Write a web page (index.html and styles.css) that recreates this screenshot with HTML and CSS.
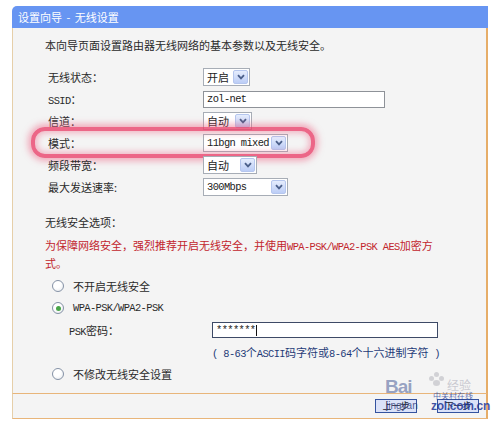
FILE: index.html
```html
<!DOCTYPE html>
<html lang="zh-CN">
<head>
<meta charset="utf-8">
<title>设置向导 - 无线设置</title>
<link rel="stylesheet" href="styles.css">
</head>
<body>
<div class="panel">
  <div class="hd">设置向导 - 无线设置</div>
  <div class="bd">
    <p class="intro">本向导页面设置路由器无线网络的基本参数以及无线安全。</p>
    <div class="form">
      <div class="row"><span class="lbl">无线状态：</span><div class="sel w47"><span class="val">开启</span><span class="arr"><svg width="8" height="6" viewBox="0 0 8 6"><path d="M1 1.2 4 4.4 7 1.2" fill="none" stroke="#4b5f8a" stroke-width="1.8"/></svg></span></div></div>
      <div class="row"><span class="lbl"><span class="m">SSID</span>：</span><div class="inp w182"><span class="m">zol-net</span></div></div>
      <div class="row"><span class="lbl">信道：</span><div class="sel w49"><span class="val">自动</span><span class="arr"><svg width="8" height="6" viewBox="0 0 8 6"><path d="M1 1.2 4 4.4 7 1.2" fill="none" stroke="#4b5f8a" stroke-width="1.8"/></svg></span></div></div>
      <div class="row hl"><span class="glow"></span><span class="lbl">模式：</span><div class="sel w85"><span class="val m">11bgn mixed</span><span class="arr"><svg width="8" height="6" viewBox="0 0 8 6"><path d="M1 1.2 4 4.4 7 1.2" fill="none" stroke="#4b5f8a" stroke-width="1.8"/></svg></span></div></div>
      <div class="row"><span class="lbl">频段带宽：</span><div class="sel w54"><span class="val">自动</span><span class="arr"><svg width="8" height="6" viewBox="0 0 8 6"><path d="M1 1.2 4 4.4 7 1.2" fill="none" stroke="#4b5f8a" stroke-width="1.8"/></svg></span></div></div>
      <div class="row"><span class="lbl">最大发送速率:</span><div class="sel w85"><span class="val m">300Mbps</span><span class="arr"><svg width="8" height="6" viewBox="0 0 8 6"><path d="M1 1.2 4 4.4 7 1.2" fill="none" stroke="#4b5f8a" stroke-width="1.8"/></svg></span></div></div>
    </div>
    <p class="sec">无线安全选项：</p>
    <p class="warn">为保障网络安全，强烈推荐开启无线安全，并使用<span class="m">WPA-PSK/WPA2-PSK AES</span>加密方式。</p>
    <div class="radio"><span class="rb"></span><span>不开启无线安全</span></div>
    <div class="radio"><span class="rb on"></span><span class="m">WPA-PSK/WPA2-PSK</span></div>
    <div class="psk"><span class="lbl"><span class="m">PSK</span>密码：</span><div class="inp pw"><span class="m">*******</span><i class="caret"></i></div></div>
    <div class="hint"><span class="m">( 8-63</span>个<span class="m">ASCII</span>码字符或<span class="m">8-64</span>个十六进制字符<span class="m"> )</span></div>
    <div class="radio"><span class="rb"></span><span>不修改无线安全设置</span></div>
  </div>
  <div class="ft">
    <span class="btn">上一步</span>
    <span class="btn">下一步</span>
    <div class="wm">
      <span class="paw"><i></i><i></i><i></i><i></i></span>
      <span class="bai">Bai</span><span class="jy">经验</span>
      <span class="jyurl">jingyan</span>
      <span class="zcn">中关村在线</span>
      <span class="zol">zol.com.cn</span>
    </div>
  </div>
</div>
</body>
</html>
```

FILE: styles.css
```css
* { box-sizing: border-box; }
html, body { margin: 0; padding: 0; background: #fff; }
body {
  padding: 6px 0 0 12px;
  font-family: "Noto Sans CJK SC", "Liberation Sans", sans-serif;
  font-size: 11px;
  color: #2a2a2a;
}
p { margin: 0; }
.m {
  font-family: "Liberation Mono", "DejaVu Sans Mono", monospace;
  font-size: 10.4px;
  letter-spacing: -0.6px;
  line-height: 1;
}

.panel { width: 476px; }
.hd {
  height: 22px;
  line-height: 22px;
  background: #6795f2;
  color: #fff;
  padding-left: 6px;
  border-radius: 5px 0 0 0;
  font-size: 11px;
  word-spacing: 2px;
}
.bd {
  background: #f4f4f4;
  border-left: 1px solid #e6cfa9;
  border-right: 2px solid #e6ad68;
  padding: 9px 0 8px 32px;
}
.intro { line-height: 16px; }

.form { margin-top: 13px; }
.row {
  display: grid;
  grid-template-columns: 155px auto;
  align-items: center;
  height: 22px;
  padding-left: 3px;
  position: relative;
}
.row > .sel, .row > .inp { justify-self: start; }

.sel {
  display: flex;
  align-items: center;
  justify-content: space-between;
  height: 18px;
  border: 1px solid #a7adb6;
  background: #fff;
  padding: 1px 1px 1px 3px;
}
.val { color: #222; line-height: 14px; }
.arr {
  width: 15px;
  height: 14px;
  display: flex;
  align-items: center;
  justify-content: center;
  border: 1px solid #b5c6ee;
  border-radius: 2px;
  background: linear-gradient(#e6edfd, #bccdf6);
}
.w47 { width: 47px; }
.w49 { width: 49px; }
.w54 { width: 54px; }
.w85 { width: 85px; }

.inp {
  height: 17px;
  border: 1px solid #8e9298;
  background: #fff;
  display: flex;
  align-items: center;
  padding-left: 3px;
  color: #222;
}
.w182 { width: 182px; }

.glow {
  position: absolute;
  left: -14px;
  top: -5px;
  width: 284px;
  height: 31px;
  border: 4px solid rgba(234, 66, 108, 0.8);
  border-radius: 14px;
  box-shadow: 0 0 6px 3px rgba(238, 96, 130, 0.5), inset 0 0 6px 2px rgba(238, 96, 130, 0.45);
  pointer-events: none;
}

.sec { margin-top: 16px; line-height: 16px; }
.warn {
  margin-top: 6px;
  width: 394px;
  line-height: 18px;
  color: #c2252c;
}

.radio {
  display: flex;
  align-items: center;
  height: 22px;
  padding-left: 7px;
  gap: 9px;
}
.warn + .radio { margin-top: 3px; }
.rb {
  width: 12px;
  height: 12px;
  border-radius: 50%;
  border: 1px solid #8592a6;
  background: radial-gradient(circle at 40% 35%, #ffffff 40%, #e3e6ea);
  display: flex;
  align-items: center;
  justify-content: center;
}
.rb.on::after {
  content: "";
  width: 5px;
  height: 5px;
  border-radius: 50%;
  background: #48a548;
}

.psk {
  display: grid;
  grid-template-columns: 143px auto;
  align-items: center;
  height: 22px;
  padding-left: 24px;
}
.pw {
  width: 226px;
  height: 16px;
  border-color: #3d4a66;
}
.caret { display: inline-block; width: 1px; height: 11px; background: #111; margin-left: 1px; }

.hint {
  height: 22px;
  line-height: 22px;
  padding-left: 167px;
  color: #1f3b78;
}

.ft {
  position: relative;
  height: 26px;
  background: #f4f4f4;
  border-top: 1px solid #e8b57a;
  border-bottom: 1px solid #e8b57a;
  border-left: 1px solid #e6cfa9;
  border-right: 2px solid #e6ad68;
  display: flex;
  align-items: center;
  justify-content: flex-end;
  gap: 20px;
  padding-right: 7px;
}
.btn {
  width: 42px;
  height: 14px;
  border: 1px solid #34539f;
  background: #dbe2f8;
  font-size: 9px;
  line-height: 12px;
  text-align: center;
  color: #223;
}
.wm {
  position: absolute;
  left: 358px;
  top: -22px;
  width: 118px;
  height: 48px;
  pointer-events: none;
}
.paw { position: absolute; left: 58px; top: 0; width: 16px; height: 14px; }
.paw i { position: absolute; width: 5px; height: 5px; border-radius: 50%; background: rgba(200,200,205,0.8); }
.paw i:nth-child(1) { left: 0; top: 4px; }
.paw i:nth-child(2) { left: 5px; top: 0; }
.paw i:nth-child(3) { left: 10px; top: 4px; }
.paw i:nth-child(4) { left: 4px; top: 8px; width: 7px; height: 6px; }
.bai {
  position: absolute; left: 14px; top: 4px;
  font-family: "Liberation Sans", sans-serif; font-weight: bold; font-size: 19px;
  color: rgba(70, 90, 150, 0.55);
  letter-spacing: -1px;
}
.jy { position: absolute; left: 76px; top: 4px; font-size: 12px; color: rgba(190,190,200,0.8); }
.jyurl {
  position: absolute; left: 15px; top: 29px;
  font-family: "Liberation Sans", sans-serif; font-size: 10px; line-height: 10px; color: rgba(40, 55, 120, 0.8);
}
.zcn { position: absolute; left: 62px; top: 19px; font-size: 8px; line-height: 9px; color: rgba(40, 60, 150, 0.75); }
.zol {
  position: absolute; left: 60px; top: 28px;
  font-family: "Liberation Sans", sans-serif; font-weight: bold; font-size: 12px; line-height: 12px;
  color: rgba(30, 55, 150, 0.85);
  letter-spacing: -0.3px;
}
```
